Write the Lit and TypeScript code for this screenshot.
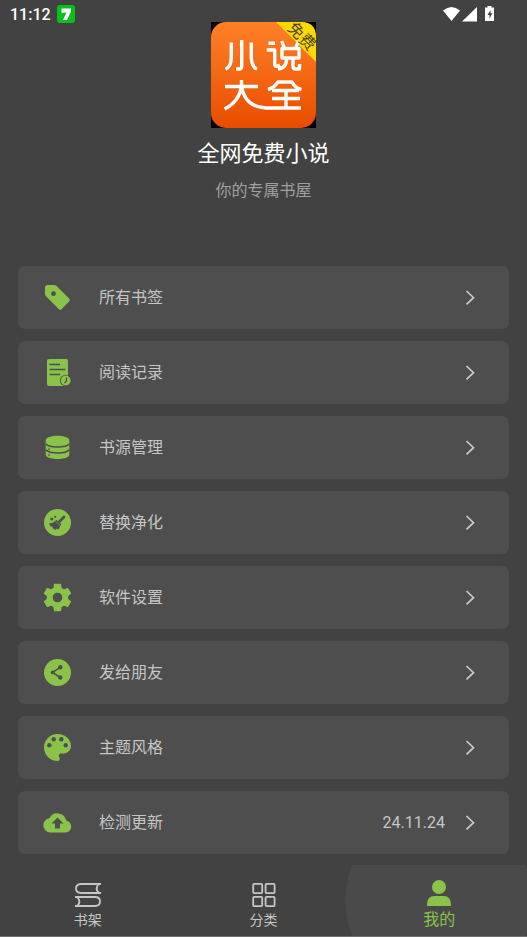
import { LitElement, html, css, svg, type TemplateResult, type SVGTemplateResult } from "lit";
import { customElement, property } from "lit/decorators.js";

interface MenuItem {
  label: string;
  icon: SVGTemplateResult;
  value?: string;
}

const menu: MenuItem[] = [
  {
    label: "所有书签",
    icon: svg`<path d="M5.500 3H12Q13.500 3 14.600 4.100L27.300 16.700Q28.400 18 27.300 19.300L19.500 27.200Q18.200 28.300 17 27.200L4 14.300Q3 13.200 3 12V5.500Q3 3 5.500 3Z"/>
      <circle class="hole" cx="11.500" cy="11.700" r="2.400"/>`,
  },
  {
    label: "阅读记录",
    icon: svg`<rect x="5" y="2" width="21" height="27" rx="2"/>
      <path class="cut" d="M7.500 7.500H18M7.500 12.500H23.500M7.500 17.500H18"/>
      <circle class="hole" cx="23.700" cy="23.500" r="5.800"/>
      <circle cx="23.700" cy="23.500" r="4.900"/><path class="cut thin" d="M24.500 20.500V24L22.500 26"/>`,
  },
  {
    label: "书源管理",
    icon: svg`<path d="M3.700 8.500C3.700 2.300 27.300 2.300 27.300 8.500V22.500C27.300 28.500 3.700 28.500 3.700 22.500Z"/>
      <path class="cut" d="M4 12C7 16 24 16 27 12M4 17.700C7 22 24 22 27 17.700"/>
      <path class="cut" d="M7 16.500v1.500M7 22.300v1.500"/>`,
  },
  {
    label: "替换净化",
    icon: svg`<circle cx="15.500" cy="15.500" r="13.500"/>
      <path class="cut handle" d="M22 10L17.500 14.500"/>
      <path class="cut" d="M13.800 13.200L19 18"/>
      <path class="hole" d="M13 14L18.300 19L16.500 22.500L14.500 21.800L13 23L11.500 21.500L10.300 21.300L10.500 19.500L8.500 19.500L7 16Q10.500 17 13 14Z"/>
      <circle class="hole" cx="9.800" cy="12" r="1.600"/><circle class="hole" cx="13.200" cy="9.800" r="1.100"/>`,
  },
  {
    label: "软件设置",
    icon: svg`<path fill-rule="evenodd" d="M12.700 1.700H18.300Q19 1.700 19.100 2.500L19.600 5.900L22 7.300L25.300 6Q26 5.800 26.400 6.400L29 10.900Q29.300 11.500 28.800 12L26.200 14V17L28.800 19Q29.300 19.500 29 20.100L26.400 24.600Q26 25.200 25.300 25L22 23.700L19.600 25.100L19.100 28.500Q19 29.300 18.300 29.300H12.700Q12 29.300 11.900 28.500L11.400 25.100L9 23.700L5.700 25Q5 25.200 4.600 24.600L2 20.100Q1.700 19.500 2.200 19L4.800 17V14L2.200 12Q1.700 11.500 2 10.900L4.600 6.400Q5 5.800 5.700 6L9 7.300L11.400 5.900L11.900 2.500Q12 1.700 12.700 1.700ZM15.500 10.700A4.800 4.800 0 1 0 15.500 20.300A4.800 4.800 0 1 0 15.500 10.700Z"/>`,
  },
  {
    label: "发给朋友",
    icon: svg`<circle cx="15.500" cy="15.500" r="13.500"/>
      <path class="cut" d="M18.300 10.300L10.500 15.400L18.300 20.500"/>
      <circle class="hole" cx="18.300" cy="10.300" r="2.200"/><circle class="hole" cx="10.700" cy="15.400" r="1.900"/><circle class="hole" cx="18.300" cy="20.500" r="2.200"/>`,
  },
  {
    label: "主题风格",
    icon: svg`<path d="M15.500 2C8 2 2 8 2 15.500S8 29 15.500 29A2.300 2.300 0 0 0 17.200 25.200A2.300 2.300 0 0 1 18.900 21.500H21.500A7.500 7.500 0 0 0 29 14C29 7.400 23 2 15.500 2Z"/>
      <circle class="hole" cx="7.300" cy="13.200" r="2.200"/><circle class="hole" cx="11.700" cy="7.300" r="2.200"/><circle class="hole" cx="19.300" cy="7.300" r="2.200"/><circle class="hole" cx="23.700" cy="13.200" r="2.200"/>`,
  },
  {
    label: "检测更新",
    value: "24.11.24",
    icon: svg`<path fill-rule="evenodd" d="M24.200 13.600A9 9 0 0 0 7.400 11.200A7.200 7.200 0 0 0 8.200 25.500H23.800A6 6 0 0 0 24.200 13.600ZM18 16.500V21.500H13V16.500H9.500L15.500 10.500L21.500 16.500Z"/>`,
  },
];

@customElement("status-bar")
export class StatusBar extends LitElement {
  static styles = css`
    :host {
      display: flex;
      align-items: center;
      height: 28px;
      padding: 0 32px 0 10px;
      color: #fff;
      font: 500 16px/29px Roboto, sans-serif;
    }
    .app {
      width: 18px;
      height: 18px;
      margin-left: 6px;
      margin-right: auto;
    }
    .signals {
      width: 52px;
      height: 18px;
      fill: #fff;
    }
  `;
  render() {
    return html`
      <span>11:12</span>
      <svg class="app" viewBox="0 0 18 18">
        <rect width="18" height="18" rx="3" fill="#08c01c" />
        <path d="M4.500 3.500H14V6.500L10 15H6L9.500 7.500L4.500 8Z" fill="#fff" />
      </svg>
      <svg class="signals" viewBox="0 0 52 18">
        <path d="M0 5.500Q8.500-1.500 17 5.500L8.500 16Z" />
        <path d="M34 2V16.500H19Z" />
        <path
          fill-rule="evenodd"
          d="M44.500 1H48.500V2.500H51V16H42V2.500H44.500ZM47.500 5L44.500 10H46.500V13.500L49.500 8.300H47.500Z"
        />
      </svg>
    `;
  }
}

@customElement("app-logo")
export class AppLogo extends LitElement {
  static styles = css`
    :host {
      display: block;
      width: 105px;
      height: 106px;
    }
    svg {
      display: block;
      width: 100%;
      height: 100%;
      overflow: visible;
    }
    .strokes {
      fill: none;
      stroke: #fff;
      stroke-width: 3.4;
      stroke-linejoin: round;
    }
    .ribbon {
      font: 400 16px "Noto Sans CJK SC", sans-serif;
      fill: #4a4416;
      text-anchor: middle;
    }
  `;
  render() {
    return html`
      <svg viewBox="0 0 105 106" role="img" aria-label="小说大全">
        <defs>
          <linearGradient id="g" x2="0" y2="1">
            <stop offset="0" stop-color="#ff8126" />
            <stop offset="1" stop-color="#e94c00" />
          </linearGradient>
        </defs>
        <rect width="105" height="106" fill="#000" />
        <rect width="105" height="106" rx="15" fill="url(#g)" />
        <path d="M65 0H90Q105 0 105 15V40Z" fill="#ffd800" />
        <g class="strokes">
          <path d="M30.700 18V44Q30.700 47 28 47H25M20.300 20.500V36Q20 45 14.500 47.300M40.300 20.500V36Q41 45 46 47.300" />
          <path d="M57.500 21.300H64M55.700 28H63.700V42Q63.700 46 69 43M70.700 19L73 25M87.500 19L85 25M71 26.500H88V36H71ZM75.500 36Q76 46 67 47M82 36V44Q82 47 84.500 47H88.500V42" />
          <path d="M14 64.500H47M30.500 58V64.500Q28 80 13.500 87M30.500 64.500Q34 85 55 86H90" />
          <path d="M57 67.500Q63 66 67 60H81Q84 66 90.500 67.500M61 68.500H88M61 76.500H89M75 68.500V86" />
        </g>
        <g transform="translate(91 14) rotate(45)"><text class="ribbon" x="0" y="6">免费</text></g>
      </svg>
    `;
  }
}

@customElement("menu-row")
export class MenuRow extends LitElement {
  @property({ attribute: false }) item!: MenuItem;

  static styles = css`
    :host {
      display: block;
    }
    .row {
      display: flex;
      align-items: center;
      box-sizing: border-box;
      width: 100%;
      height: 63px;
      padding: 0 32px 0 24px;
      border: 0;
      border-radius: 7px;
      background: #4e4e4e;
      color: #c6c6c6;
      font: 400 16px/25px Roboto, "Noto Sans CJK SC", sans-serif;
      text-align: left;
    }
    .icon {
      width: 31px;
      height: 31px;
      fill: #8bc34a;
    }
    .label {
      flex: 1;
      margin-left: 26px;
    }
    .value {
      margin-right: 18px;
    }
    .arrow {
      width: 14px;
      height: 16px;
      fill: none;
      stroke: #cacaca;
      stroke-width: 1.7;
    }
    .cut {
      fill: none;
      stroke: #4e4e4e;
      stroke-width: 1.5;
    }
    .thin {
      stroke-width: 1.2;
    }
    .handle {
      stroke-width: 2.6;
      stroke-linecap: round;
    }
    .hole {
      fill: #4e4e4e;
    }
  `;
  render() {
    const { label, icon, value } = this.item;
    return html`
      <button class="row">
        <svg class="icon" viewBox="0 0 31 31" aria-hidden="true">${icon}</svg>
        <span class="label">${label}</span>
        ${value ? html`<span class="value">${value}</span>` : ""}
        <svg class="arrow" viewBox="0 0 14 16" aria-hidden="true">
          <path d="M3.500 1L10.500 7.700L3.500 14.400" />
        </svg>
      </button>
    `;
  }
}

@customElement("tab-bar")
export class TabBar extends LitElement {
  static styles = css`
    :host {
      display: flex;
      height: 71px;
      overflow: hidden;
      border-bottom: 1px solid #707070;
    }
    .tab {
      flex: 1;
      position: relative;
      isolation: isolate;
      display: flex;
      flex-direction: column;
      align-items: center;
      justify-content: flex-end;
      box-sizing: border-box;
      padding: 0 0 6px;
      border: 0;
      background: none;
      color: #c6c6c6;
      font: 400 14px/20px Roboto, "Noto Sans CJK SC", sans-serif;
    }
    .tab.active {
      color: #8bc34a;
      font-size: 16px;
    }
    .tab.active::before {
      content: "";
      position: absolute;
      z-index: -1;
      inset: 0 -8px;
      background: radial-gradient(circle at center, #4a4a4a 93px, transparent 94px);
    }
    .icon {
      width: 28px;
      height: 28px;
      margin-bottom: 2px;
      fill: none;
      stroke: #c6c6c6;
      stroke-width: 1.8;
    }
    .solid {
      fill: #8bc34a;
      stroke: none;
    }
  `;
  private tab(label: string, icon: SVGTemplateResult, active = false): TemplateResult {
    return html`
      <button class="tab ${active ? "active" : ""}">
        <svg class="icon ${active ? "solid" : ""}" viewBox="0 0 28 28" aria-hidden="true">${icon}</svg>
        <span>${label}</span>
      </button>
    `;
  }
  render() {
    return html`
      ${this.tab(
        "书架",
        svg`<path d="M27 4H7C3 4 2 6.300 2 8.500S3 13 7 13H27M24.800 4Q20.500 8.500 24.800 13M1 17H21C25 17 26 19.300 26 21.500S25 26 21 26H1M3.200 17Q7.500 21.500 3.200 26"/>`,
      )}
      ${this.tab(
        "分类",
        svg`<rect x="3.200" y="3.900" width="9" height="9.200" rx="1"/><rect x="15.600" y="3.900" width="9" height="9.200" rx="1"/><rect x="3.200" y="16.900" width="9" height="9.200" rx="1"/><rect x="15.600" y="16.900" width="9" height="9.200" rx="1"/>`,
      )}
      ${this.tab(
        "我的",
        svg`<circle cx="14" cy="7" r="7"/><path d="M2 25Q2 16 9.500 16H18.500Q26 16 26 25Q26 26 25 26H3Q2 26 2 25Z"/>`,
        true,
      )}
    `;
  }
}

@customElement("app-root")
export class AppRoot extends LitElement {
  static styles = css`
    :host {
      display: flex;
      flex-direction: column;
      min-height: 100vh;
      background: #424242;
      font-family: Roboto, "Noto Sans CJK SC", sans-serif;
    }
    .profile {
      display: flex;
      flex-direction: column;
      align-items: center;
      margin-top: -6px;
      padding-bottom: 63px;
    }
    .title {
      margin: 10px 0 0;
      color: #fff;
      font-size: 22px;
      font-weight: 400;
      line-height: 32px;
    }
    .subtitle {
      margin: 9px 0 0;
      color: #a0a0a0;
      font-size: 16px;
      line-height: 24px;
    }
    .list {
      display: flex;
      flex-direction: column;
      gap: 12px;
      padding: 0 18px;
    }
    .tabs {
      margin-top: auto;
    }
  `;
  render() {
    return html`
      <status-bar></status-bar>
      <header class="profile">
        <app-logo></app-logo>
        <h1 class="title">全网免费小说</h1>
        <p class="subtitle">你的专属书屋</p>
      </header>
      <main class="list">${menu.map((item) => html`<menu-row .item=${item}></menu-row>`)}</main>
      <tab-bar class="tabs"></tab-bar>
    `;
  }
}
